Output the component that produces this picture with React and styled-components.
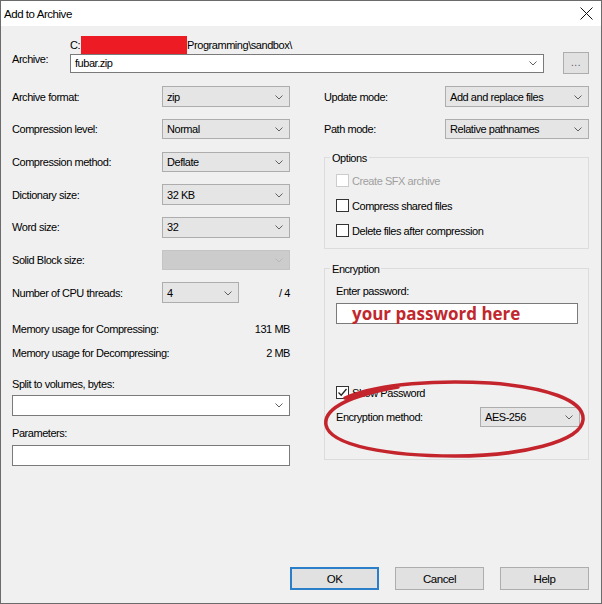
import React from 'react';
import styled, { createGlobalStyle } from 'styled-components';

const GlobalStyle = createGlobalStyle`
  html, body {
    margin: 0;
    padding: 0;
    background: #f0f0f0;
  }
  * {
    box-sizing: border-box;
  }
`;

const Window = styled.div`
  position: relative;
  width: 602px;
  height: 604px;
  display: flex;
  flex-direction: column;
  border: 1px solid #6b6b6b;
  background: #f0f0f0;
  font-family: 'Liberation Sans', Arial, sans-serif;
  font-size: 11px;
  letter-spacing: -0.45px;
  color: #000;
  overflow: hidden;
`;

const TitleBar = styled.div`
  height: 25px;
  display: flex;
  align-items: center;
  justify-content: space-between;
  background: #fff;
  padding: 0 8px 0 3px;
`;

const Title = styled.span`
  font-size: 11.5px;
`;

const Body = styled.div`
  flex: 1;
  display: flex;
  flex-direction: column;
  padding: 10px 12px 0 11px;
`;

const ArchiveRow = styled.div`
  display: grid;
  grid-template-columns: 58px 1fr 45px;
  grid-template-rows: 17px 20px;
  align-items: center;
`;

const ArchiveLabel = styled.span`
  grid-row: 1 / span 2;
  align-self: center;
  padding-top: 9px;
`;

const PathLine = styled.div`
  display: flex;
  align-items: center;
  line-height: 16px;
`;

const Redacted = styled.span`
  display: inline-block;
  width: 106px;
  height: 18px;
  margin-left: 1px;
  background: #ed1c24;
`;

const BrowseButton = styled.div`
  grid-column: 3;
  grid-row: 1 / span 2;
  justify-self: end;
  align-self: end;
  width: 26px;
  height: 22px;
  margin-bottom: -1px;
  display: flex;
  align-items: flex-end;
  justify-content: center;
  padding-bottom: 5px;
  background: #e1e1e1;
  border: 1px solid #adadad;
  color: #555;
  font-size: 10px;
  letter-spacing: 0.5px;
`;

const Columns = styled.div`
  display: grid;
  grid-template-columns: 278px 265px;
  column-gap: 34px;
  margin-top: 13px;
`;

const Column = styled.div`
  display: flex;
  flex-direction: column;
`;

const FieldRow = styled.div`
  display: flex;
  align-items: center;
  justify-content: space-between;
  height: 21px;
  margin-top: ${(p) => p.$gap ?? 11.7}px;
  &:first-child {
    margin-top: 0;
  }
`;

const TextLine = styled.div`
  display: flex;
  justify-content: space-between;
  line-height: 16px;
  margin-top: ${(p) => p.$gap || 0}px;
`;

const ComboBox = styled.div`
  position: relative;
  width: ${(p) => (p.$width ? `${p.$width}px` : '100%')};
  height: ${(p) => p.$height || 21}px;
  margin-top: ${(p) => p.$gap || 0}px;
  margin-right: ${(p) => p.$right || 0}px;
  display: flex;
  align-items: center;
  padding-left: 4px;
  background: ${(p) => (p.$disabled ? '#cccccc' : p.$white ? '#ffffff' : '#e5e5e5')};
  border: 1px solid ${(p) => (p.$disabled ? '#c4c4c4' : p.$white ? '#7a7a7a' : '#adadad')};
  color: #000;
`;

const Chevron = styled.svg`
  position: absolute;
  right: 6px;
  top: 50%;
  margin-top: -2px;
  width: 8px;
  height: 5px;
`;

const TextBox = styled.div`
  height: ${(p) => p.$height || 21}px;
  margin-top: ${(p) => p.$gap || 0}px;
  display: flex;
  align-items: center;
  background: #fff;
  border: 1px solid #7a7a7a;
  padding-left: 15px;
`;

const PasswordHint = styled.span`
  font-family: 'Open Sans', 'Noto Sans', sans-serif;
  font-weight: 700;
  font-size: 17px;
  letter-spacing: 0;
  color: #c1272d;
  line-height: 1;
  padding-top: 1px;
`;

const Group = styled.fieldset`
  margin: ${(p) => p.$gap || 0}px 0 0 0;
  padding: 0 10px ${(p) => p.$bottom || 9}px 11px;
  border: 1px solid #dcdcdc;
  min-width: 0;
`;

const Legend = styled.legend`
  margin-left: -6px;
  padding: 0 2px;
  line-height: 16px;
`;

const CheckRow = styled.div`
  display: flex;
  align-items: center;
  gap: 3px;
  line-height: 16px;
  margin-top: ${(p) => p.$gap || 0}px;
  color: ${(p) => (p.$disabled ? '#a0a0a0' : '#000')};
`;

const CheckBox = styled.span`
  width: 13px;
  height: 13px;
  display: inline-flex;
  align-items: center;
  justify-content: center;
  border: 1px solid ${(p) => (p.$disabled ? '#cccccc' : '#333333')};
  background: #fff;
`;

const GroupLabel = styled.div`
  line-height: 16px;
  margin-top: ${(p) => p.$gap || 0}px;
`;

const ButtonRow = styled.div`
  display: flex;
  justify-content: flex-end;
  gap: 16px;
  padding: 0 12px 13px 0;
`;

const DialogButton = styled.div`
  width: 89px;
  height: 23px;
  display: flex;
  align-items: center;
  justify-content: center;
  background: #e1e1e1;
  border: ${(p) => (p.$primary ? '2px solid #2b7fc8' : '1px solid #adadad')};
  font-size: 11.5px;
`;

const Scribble = styled.svg`
  position: absolute;
  left: -1px;
  top: -1px;
  width: 602px;
  height: 604px;
  pointer-events: none;
`;

const ChevronIcon = ({ faded }) => (
  <Chevron viewBox="0 0 8 5">
    <polyline points="0.5,0.5 4,4 7.5,0.5" fill="none" stroke={faded ? '#b8b8b8' : '#606060'} strokeWidth="1" />
  </Chevron>
);

const Combo = ({ value, ...rest }) => (
  <ComboBox {...rest}>
    {value}
    <ChevronIcon faded={rest.$disabled} />
  </ComboBox>
);

const Check = ({ label, checked, disabled, gap }) => (
  <CheckRow $disabled={disabled} $gap={gap}>
    <CheckBox $disabled={disabled}>
      {checked && (
        <svg width="11" height="11" viewBox="0 0 11 11">
          <polyline points="1.5,5.5 4.2,8.2 9.5,2" fill="none" stroke="#222" strokeWidth="1.3" />
        </svg>
      )}
    </CheckBox>
    {label}
  </CheckRow>
);

const leftCombos = [
  ['Archive format:', 'zip'],
  ['Compression level:', 'Normal'],
  ['Compression method:', 'Deflate'],
  ['Dictionary size:', '32 KB'],
  ['Word size:', '32'],
];

const App = () => (
  <>
    <GlobalStyle />
    <Window>
      <TitleBar>
        <Title>Add to Archive</Title>
        <svg width="13" height="13" viewBox="0 0 13 13">
          <path d="M0.5 0.5 L12.5 12.5 M12.5 0.5 L0.5 12.5" stroke="#111" strokeWidth="1" />
        </svg>
      </TitleBar>

      <Body>
        <ArchiveRow>
          <ArchiveLabel>Archive:</ArchiveLabel>
          <PathLine>
            C:<Redacted />Programming\sandbox\
          </PathLine>
          <BrowseButton>...</BrowseButton>
          <Combo value="fubar.zip" $white $height={19} />
        </ArchiveRow>

        <Columns>
          <Column>
            {leftCombos.map(([label, value]) => (
              <FieldRow key={label}>
                <span>{label}</span>
                <Combo value={value} $width={128} $height={20.5} />
              </FieldRow>
            ))}
            <FieldRow>
              <span>Solid Block size:</span>
              <Combo $width={128} $height={20.5} $disabled />
            </FieldRow>
            <FieldRow>
              <span>Number of CPU threads:</span>
              <Combo value="4" $width={77} $height={20.5} style={{ marginLeft: 'auto' }} />
              <span style={{ width: 51, textAlign: 'right' }}>/ 4</span>
            </FieldRow>

            <TextLine $gap={18}>
              <span>Memory usage for Compressing:</span>
              <span>131 MB</span>
            </TextLine>
            <TextLine $gap={8}>
              <span>Memory usage for Decompressing:</span>
              <span>2 MB</span>
            </TextLine>

            <TextLine $gap={15}>Split to volumes, bytes:</TextLine>
            <Combo $white $height={20.5} $gap={3} />
            <TextLine $gap={9}>Parameters:</TextLine>
            <TextBox $gap={4} />
          </Column>

          <Column>
            <FieldRow>
              <span>Update mode:</span>
              <Combo value="Add and replace files" $width={144} $height={20.5} />
            </FieldRow>
            <FieldRow $gap={11.5}>
              <span>Path mode:</span>
              <Combo value="Relative pathnames" $width={144} $height={20.5} />
            </FieldRow>

            <Group $gap={10}>
              <Legend>Options</Legend>
              <Check label="Create SFX archive" disabled gap={7} />
              <Check label="Compress shared files" gap={9} />
              <Check label="Delete files after compression" gap={9} />
            </Group>

            <Group $gap={12} $bottom={32}>
              <Legend>Encryption</Legend>
              <GroupLabel $gap={6}>Enter password:</GroupLabel>
              <TextBox $gap={4}>
                <PasswordHint>your password here</PasswordHint>
              </TextBox>
              <Check label="Show Password" checked gap={61} />
              <FieldRow $gap={6} style={{ height: 20 }}>
                <span>Encryption method:</span>
                <Combo value="AES-256" $width={100} $height={20} $right={-2} />
              </FieldRow>
            </Group>
          </Column>
        </Columns>
      </Body>

      <ButtonRow>
        <DialogButton $primary>OK</DialogButton>
        <DialogButton>Cancel</DialogButton>
        <DialogButton>Help</DialogButton>
      </ButtonRow>

      <Scribble viewBox="0 0 602 604">
        <path
          d="M345 398 C380 383, 440 380, 490 383 C545 387, 585 400, 583 420 C581 442, 520 456, 455 456 C390 456, 330 446, 326 425 C323 408, 352 395, 398 387"
          fill="none"
          stroke="#c4252d"
          strokeWidth="3.5"
          strokeLinecap="round"
        />
      </Scribble>
    </Window>
  </>
);

export default App;
